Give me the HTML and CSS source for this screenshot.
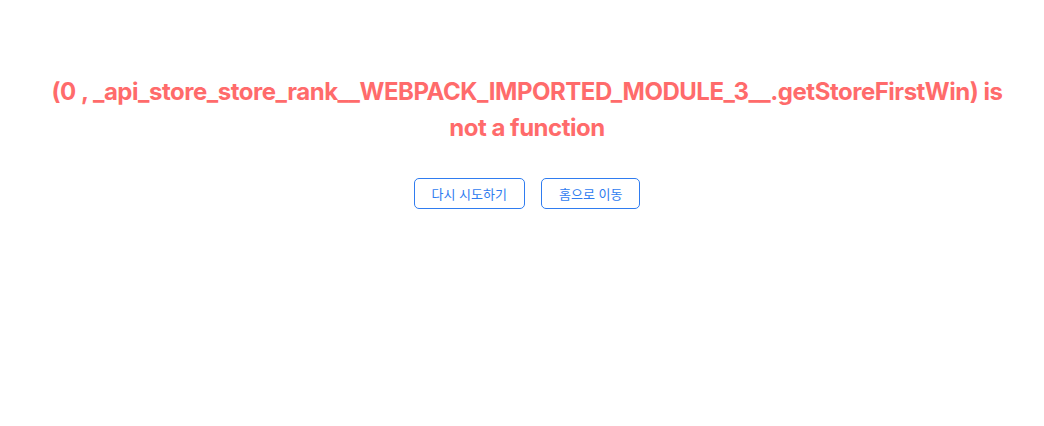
FILE: index.html
```html
<!DOCTYPE html>
<html lang="ko">
<head>
<meta charset="utf-8">
<link rel="stylesheet" href="styles.css">
</head>
<body>
<div class="error-page">
  <h1 class="error-message">(0 , _api_store_store_rank__WEBPACK_IMPORTED_MODULE_3__.getStoreFirstWin) is not a function</h1>
  <div class="actions">
    <button class="btn">다시 시도하기</button>
    <button class="btn">홈으로 이동</button>
  </div>
</div>
</body>
</html>
```
FILE: styles.css
```css
html, body {
  margin: 0;
  padding: 0;
  background: #fff;
}
body {
  font-family: Inter, "Noto Sans CJK KR", sans-serif;
}
.error-page {
  padding: 74px 35px 0 45px;
  display: flex;
  flex-direction: column;
  align-items: center;
}
.error-message {
  margin: 0;
  font-size: 24px;
  line-height: 36px;
  font-weight: 700;
  letter-spacing: -0.48px;
  color: #ff6b6b;
  text-align: center;
}
.actions {
  margin-top: 32px;
  display: flex;
  gap: 16px;
}
.btn {
  font-family: Inter, "Noto Sans CJK KR", sans-serif;
  font-size: 13px;
  color: #2f7cf0;
  background: #fff;
  border: 1px solid #2f7cf0;
  border-radius: 5px;
  height: 31px;
  padding: 0 17px;
  cursor: pointer;
}
```
